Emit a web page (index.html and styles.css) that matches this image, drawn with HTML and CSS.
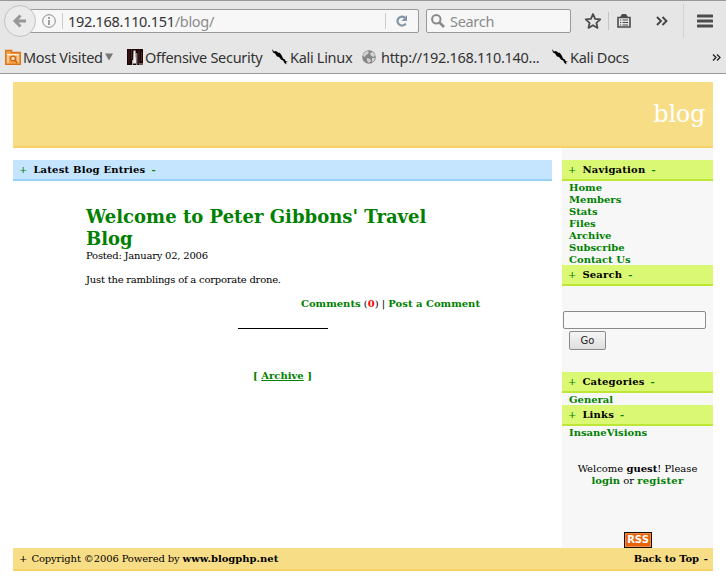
FILE: index.html
```
<!DOCTYPE html>
<html lang="en">
<head>
<meta charset="utf-8">
<title>blog</title>
<link rel="stylesheet" href="styles.css">
</head>
<body>
<svg class="defs" aria-hidden="true">
  <symbol id="kali" viewBox="0 0 16 16"><path d="M0 0l2 2.500L4 2l2 1.500 2 .5 2 3 1 2.500 2 1 .5 1.500L16 13l-2 .3.500 2.200-2-1.500-1.500-2.500-2-1-2-2.500-2-.5-2-3-2-1z" fill="#000"/></symbol>
</svg>
<header class="chrome">
  <div class="toolbar">
    <div class="back"><svg width="16" height="16" viewBox="0 0 16 16"><path d="M14 8H3M8.500 2.500L3 8l5.500 5.500" fill="none" stroke="#979797" stroke-width="3"/></svg></div>
    <div class="url">
      <svg class="info" width="14" height="14" viewBox="0 0 14 14"><circle cx="7" cy="7" r="6.300" fill="none" stroke="#8a8a8a"/><path d="M7 3v2M7 6v5" stroke="#8a8a8a" stroke-width="1.600"/></svg>
      <span class="urltext">192.168.110.151<i>/blog/</i></span>
      <svg class="reload" width="14" height="14" viewBox="0 0 14 14"><path d="M10.800 9.500A4.500 4.500 0 1 1 10 3.700" fill="none" stroke="#8497a8" stroke-width="2.200"/><path d="M12 1v6H6.500z" fill="#8497a8"/></svg>
    </div>
    <div class="searchbar">
      <svg width="14" height="14" viewBox="0 0 14 14"><circle cx="5.300" cy="5.300" r="4.200" fill="none" stroke="#8a8a8a" stroke-width="2"/><path d="M8.500 8.500l4.500 4.500" stroke="#8a8a8a" stroke-width="2.600"/></svg>
      <span>Search</span>
    </div>
    <svg class="star" width="18" height="18" viewBox="0 0 18 18"><path d="M9 2l2.100 4.800 5.200.5-3.900 3.500 1.100 5.100L9 13.200l-4.500 2.700 1.100-5.100-3.900-3.500 5.200-.5z" fill="none" stroke="#4c4c4c" stroke-width="1.800" stroke-linejoin="round"/></svg>
    <span class="tiny-sep"></span>
    <svg class="clip" width="14" height="14" viewBox="0 0 14 14"><path d="M1 3.500h12v9.500H1z" fill="none" stroke="#4c4c4c" stroke-width="1.600"/><path d="M3 3l2-3h4l2 3z" fill="#4c4c4c"/><path d="M3 6h1.200M5.500 6H11M3 8.500h1.200M5.500 8.500H11M3 11h1.200M5.500 11H11" stroke="#4c4c4c" stroke-width="1"/></svg>
    <svg class="more" width="12" height="10" viewBox="0 0 12 10"><path d="M1 1l4 4-4 4M6.500 1l4 4-4 4" fill="none" stroke="#444" stroke-width="1.900"/></svg>
    <span class="tall-sep"></span>
    <svg class="menu" width="16" height="14" viewBox="0 0 16 14"><path d="M1 2h14M1 7h14M1 12h14" stroke="#4c4c4c" stroke-width="3" stroke-linecap="round"/></svg>
  </div>
  <div class="bookmarks">
    <svg class="folder" width="16" height="16" viewBox="0 0 16 16"><path d="M.7 1.500h6v2h8.600v11.800H.7z" fill="#f4a04a" stroke="#d9731a" stroke-width="1.300"/><path d="M2 5.500h12M3 14V6h10v8" fill="none" stroke="#fff0dc"/><circle cx="8" cy="9.500" r="2.400" fill="#fbe0bc" stroke="#cc6410" stroke-width="1.200"/><path d="M10 11.500l2.500 2.500" stroke="#cc6410" stroke-width="1.500"/></svg>
    <span class="bm bm-visited">Most Visited</span>
    <svg class="caret" width="8" height="8" viewBox="0 0 8 8"><path d="M0 .5h8L4 7.500z" fill="#777"/></svg>
    <svg class="offsec" width="16" height="16" viewBox="0 0 16 16"><path d="M0 0h16v16H0z" fill="#1c0505"/><path d="M2 1v14M4.500 0v10M12 1v14M14.500 3v9" stroke="#4b2525"/><path d="M6.500 1.500h2l.5 10v3H6z" fill="#eee"/><path d="M9.800 4v12M5.500 11v5M12 15h4" stroke="#ddd" stroke-width=".8"/></svg>
    <span class="bm bm-offsec">Offensive Security</span>
    <svg class="kali1" width="16" height="16"><use href="#kali"/></svg>
    <span class="bm bm-kali">Kali Linux</span>
    <svg class="globe" width="14" height="14" viewBox="0 0 14 14"><circle cx="7" cy="7" r="6.800" fill="#868686"/><path d="M2 3l3-2 2 1-1 2-2 1-1 2-2-1zM8 3l3-1 2 3-1 2-3-1zM5 8l3 1 1 2-2 2-2-2zM10 8l3 0-1 3-2 1z" fill="#d2d2d2"/></svg>
    <span class="bm bm-http">http://192.168.110.140...</span>
    <svg class="kali2" width="16" height="16"><use href="#kali"/></svg>
    <span class="bm bm-docs">Kali Docs</span>
    <svg class="overflow" width="9" height="7" viewBox="0 0 9 7"><path d="M1 .5l3 3-3 3M5 .5l3 3-3 3" fill="none" stroke="#222" stroke-width="1.300"/></svg>
  </div>
</header>
<div class="page">
  <div class="banner">blog</div>
  <div class="columns">
    <main>
      <h2 class="bar blue"><i>+</i><span class="t-latest">Latest Blog Entries</span><i>-</i></h2>
      <article>
        <h1>Welcome to Peter Gibbons' Travel Blog</h1>
        <p class="posted">Posted: January 02, 2006</p>
        <p class="body">Just the ramblings of a corporate drone.</p>
        <p class="comments"><a>Comments</a> (<b class="count">0</b>) | <a>Post a Comment</a></p>
      </article>
      <div class="rule"></div>
      <p class="archive">[ <u>Archive</u> ]</p>
    </main>
    <aside>
      <h2 class="bar lime"><i>+</i><span>Navigation</span><i>-</i></h2>
      <ul><li>Home</li><li>Members</li><li>Stats</li><li>Files</li><li>Archive</li><li>Subscribe</li><li>Contact Us</li></ul>
      <h2 class="bar lime"><i>+</i><span>Search</span><i>-</i></h2>
      <form class="find"><input type="text" aria-label="Search"><button type="button">Go</button></form>
      <h2 class="bar lime"><i>+</i><span>Categories</span><i>-</i></h2>
      <ul><li>General</li></ul>
      <h2 class="bar lime"><i>+</i><span>Links</span><i>-</i></h2>
      <ul><li>InsaneVisions</li></ul>
      <p class="welcome">Welcome <b>guest</b>! Please<br><a>login</a> or <a class="register">register</a></p>
      <div class="rss">RSS</div>
    </aside>
  </div>
  <footer><span class="plus">+</span><span class="copy">Copyright ©2006 Powered by <b>www.blogphp.net</b></span><b class="top">Back to Top</b><b>-</b></footer>
</div>
</body>
</html>
```
FILE: styles.css
```
* { box-sizing: border-box; }
body { margin: 0; width: 726px; height: 576px; overflow: hidden; background: #fff; color: #000; font: 10px/12px "DejaVu Serif", serif; }
h1, h2, p, ul { margin: 0; padding: 0; }
ul { list-style: none; }
i { font-style: normal; }
svg { display: block; flex: none; }
.defs { position: absolute; width: 0; height: 0; }

.chrome { height: 74px; background: #e6e6e6; border-top: 1px solid #999; border-bottom: 1px solid #999; font: 14.5px/20px "Noto Sans", sans-serif; color: #333; letter-spacing: -.3px; }
.toolbar { display: flex; align-items: center; height: 40px; padding-left: 4px; }
.back { display: flex; align-items: center; justify-content: center; flex: none; width: 32px; height: 32px; border: 1px solid #c2c2c2; border-radius: 50%; background: #ebebeb; z-index: 1; }
.url { display: flex; align-items: center; flex: none; width: 391px; height: 24px; margin-left: -8px; padding-left: 13px; border: 1px solid #999; border-radius: 2px; background: #f7f7f7; }
.urltext { margin-left: 6px; padding-left: 5px; width: 324px; border-left: 1px solid #ccc; line-height: 16px; border-right: 1px solid #ccc; }
.urltext i { color: #8c8c8c; }
.reload { margin-left: 9px; }
.searchbar { display: flex; align-items: center; flex: none; width: 145px; height: 24px; margin-left: 7px; padding-left: 4px; border: 1px solid #999; border-radius: 2px; background: #f7f7f7; color: #8a8a8a; }
.searchbar span { margin-left: 5px; }
.star { margin-left: 13px; }
.tiny-sep { width: 1px; height: 18px; margin: 0 8px 0 6px; background: #c4c4c4; }
.more { margin-left: 25px; }
.tall-sep { width: 1px; height: 34px; margin: 0 13px 0 15px; background: #d2d2d2; }
.bookmarks { display: flex; align-items: center; height: 32px; padding-left: 5px; }
.bm { flex: none; white-space: nowrap; }
.bm-visited { width: 82px; margin-left: 2px; }
.offsec { margin-left: 14px; }
.bm-offsec { width: 127px; margin-left: 2px; }
.bm-kali { width: 72px; margin-left: 2px; }
.bm-http { width: 171px; margin-left: 5px; }
.bm-docs { width: 142px; margin-left: 2px; }

.page { width: 700px; margin: 8px 0 0 13px; }
.banner { height: 66px; padding: 17px 8px 0 0; background: #f8dd87; border-bottom: 2px solid #f6d265; color: #fff; font-size: 24px; line-height: 30px; text-align: right; letter-spacing: -.3px; }
.columns { display: flex; justify-content: space-between; height: 400px; }
main { width: 539px; padding-top: 12px; }
aside { width: 151px; padding-top: 12px; background: #f7f7f7; }
.bar { display: flex; height: 21px; padding: 0 6px; font-size: 10px; line-height: 19px; border-bottom: 2px solid; }
.bar i { color: green; font-weight: 700; }
.bar span { margin: 0 6px; letter-spacing: .2px; }
.blue { background: #c5e5ff; border-color: #99d1fb; }
.lime { background: #daf873; border-color: #bee735; }
.bar i:first-child { font-weight: 400; }
article { width: 395px; margin: 25px 0 0 72px; }
h1 { width: 365px; padding-left: 1px; color: green; font-size: 18px; line-height: 22px; letter-spacing: .02px; }
.posted, .body { padding-left: 1px; letter-spacing: -.23px; }
.body { margin-top: 12px; }
.comments { margin-top: 12px; text-align: right; }
a, li, .archive { color: green; font-weight: 700; }
.count { color: red; }
.rule { width: 90px; height: 1px; margin: 18px 0 0 225px; background: #000; }
.archive { margin-top: 41px; text-align: center; }
li { height: 12px; padding-left: 7px; line-height: 14px; }
.find { display: flex; flex-direction: column; align-items: flex-start; height: 86px; padding: 25px 0 0 1px; }
.find input { width: 143px; height: 18px; padding: 0; border: 1px solid #8b8b8b; border-radius: 2px; background: #fafafa; }
.find button { width: 37px; height: 19px; margin: 2px 0 0 6px; padding: 0; border: 1px solid #8b8b8b; border-radius: 2px; background: linear-gradient(#f6f6f6, #dedede); font: 10px/17px "DejaVu Sans", sans-serif; color: #222; }
.welcome { margin-top: 25px; text-align: center; }
.register { letter-spacing: .25px; }
.rss { width: 28px; height: 16px; margin: 45px 0 0 62px; border: 1px solid #111; background: #e8640c; box-shadow: inset 0 0 0 1px #f78a3c; color: #fff; font: 700 10px/14px "DejaVu Sans", sans-serif; text-align: center; }
footer { display: flex; height: 23px; padding: 0 5px 0 7px; background: #f8dd87; border-bottom: 2px solid #f6d265; line-height: 21px; }
.plus { margin-left: -1px; }
.copy { margin-left: 4px; letter-spacing: -.13px; }
.copy b { letter-spacing: 0; }
.top { margin: 0 5px 0 auto; letter-spacing: -.1px; }
```
